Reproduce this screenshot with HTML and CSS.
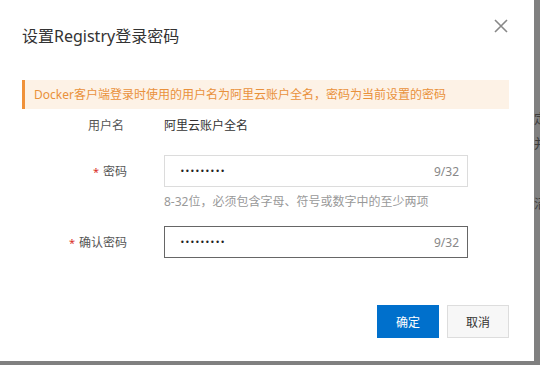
FILE: index.html
```html
<!DOCTYPE html>
<html lang="zh-CN">
<head>
    <meta charset="UTF-8">
    <title>设置Registry登录密码</title>
    <link rel="stylesheet" href="styles.css">
</head>
<body>

    <div class="dialog">
        <header class="dialog-head">
            <h1>设置Registry登录密码</h1>
            <button class="close-btn" aria-label="关闭">
                <svg width="14" height="14" viewBox="0 0 14 14">
                    <path d="M1 1 L13 13 M13 1 L1 13" stroke="#888" stroke-width="1.6" fill="none"/>
                </svg>
            </button>
        </header>

        <div class="notice">Docker客户端登录时使用的用户名为阿里云账户全名，密码为当前设置的密码</div>

        <form class="form">
            <div class="row row-static">
                <label>用户名</label>
                <div class="value">阿里云账户全名</div>
            </div>

            <div class="row">
                <label><span class="req">*</span>密码</label>
                <div class="field">
                    <input type="password" value="123456789">
                    <span class="count">9/32</span>
                </div>
            </div>
            <div class="row row-help">
                <span></span>
                <div class="help">8-32位，必须包含字母、符号或数字中的至少两项</div>
            </div>

            <div class="row">
                <label><span class="req">*</span>确认密码</label>
                <div class="field field-active">
                    <input type="password" value="123456789">
                    <span class="count">9/32</span>
                </div>
            </div>
        </form>

        <footer class="dialog-foot">
            <button class="btn btn-primary">确定</button>
            <button class="btn">取消</button>
        </footer>
    </div>

    <!-- page behind the overlay, only a sliver shows -->
    <div class="behind">
        <p class="b1">定</p>
        <p class="b2">并</p>
        <p class="b3">沼</p>
    </div>

</body>
</html>
```

FILE: styles.css
```css
/* --- BASE --- */
body {
    margin: 0;
    height: 365px;
    overflow: hidden;
    display: flex;
    align-items: flex-start;
    background-color: #808080;
    font-family: "Noto Sans", "Noto Sans CJK SC", sans-serif;
    font-size: 12px;
    color: #333;
}

/* --- DIALOG --- */
.dialog {
    width: 534px;
    height: 361px;
    flex-shrink: 0;
    background-color: #fff;
    display: flex;
    flex-direction: column;
}

.dialog-head {
    display: flex;
    justify-content: space-between;
    align-items: flex-start;
    padding: 16px 26px 0 22px;
}

.dialog-head h1 {
    margin: 8px 0 0;
    font-size: 16px;
    font-weight: 400;
    line-height: 24px;
    color: #333;
}

.close-btn {
    border: 0;
    background: none;
    padding: 0;
    margin-top: 3px;
    width: 14px;
    height: 14px;
    cursor: pointer;
}

/* --- NOTICE --- */
.notice {
    margin: 32px 25px 0 22px;
    height: 29px;
    line-height: 29px;
    padding-left: 9px;
    border-left: 3px solid #f0923a;
    background-color: #fdf2e6;
    color: #e9913b;
}

/* --- FORM --- */
.form {
    margin: 0;
    padding-left: 22px;
}

.row {
    display: grid;
    grid-template-columns: 105px 304px;
    column-gap: 37px;
    align-items: center;
}

.row label {
    text-align: right;
    color: #555;
}

.row-static {
    margin-top: 2px;
    height: 28px;
}

.row-static label {
    padding-right: 3px;
}

.value {
    color: #333;
}

.row + .row:not(.row-help) {
    margin-top: 16px;
}

.row-help {
    margin-top: 7px !important;
}

.req {
    color: #d93026;
    margin-right: 4px;
    font-size: 11px;
}

.field {
    display: flex;
    align-items: center;
    height: 32px;
    box-sizing: border-box;
    border: 1px solid #dcdcdc;
    padding: 0 8px 0 15px;
}

.field-active {
    border-color: #666;
}

.field input {
    flex: 1;
    border: 0;
    outline: 0;
    padding: 0;
    font-size: 8px;
    letter-spacing: 0.3px;
    color: #222;
    background: none;
    font-family: "DejaVu Sans", sans-serif;
}

.count {
    color: #888;
}

.help {
    color: #999;
    line-height: 16px;
}

/* --- FOOTER --- */
.dialog-foot {
    margin-top: auto;
    margin-bottom: 23px;
    padding-right: 25px;
    display: flex;
    justify-content: flex-end;
    gap: 8px;
}

.btn {
    width: 62px;
    height: 33px;
    border: 1px solid #ddd;
    background-color: #f7f7f7;
    color: #333;
    font-family: inherit;
    font-size: 12px;
    padding: 0;
    cursor: pointer;
}

.btn-primary {
    border-color: #0070cc;
    background-color: #0070cc;
    color: #fff;
}

/* --- PAGE BEHIND --- */
.behind {
    width: 6px;
    overflow: hidden;
    color: #3c3c3c;
    font-size: 13px;
}

.behind p {
    margin: 0;
    line-height: 16px;
    white-space: nowrap;
}

.b1 { margin-top: 110px !important; }
.b2 { margin-top: 9px !important; }
.b3 { margin-top: 44px !important; }
```
